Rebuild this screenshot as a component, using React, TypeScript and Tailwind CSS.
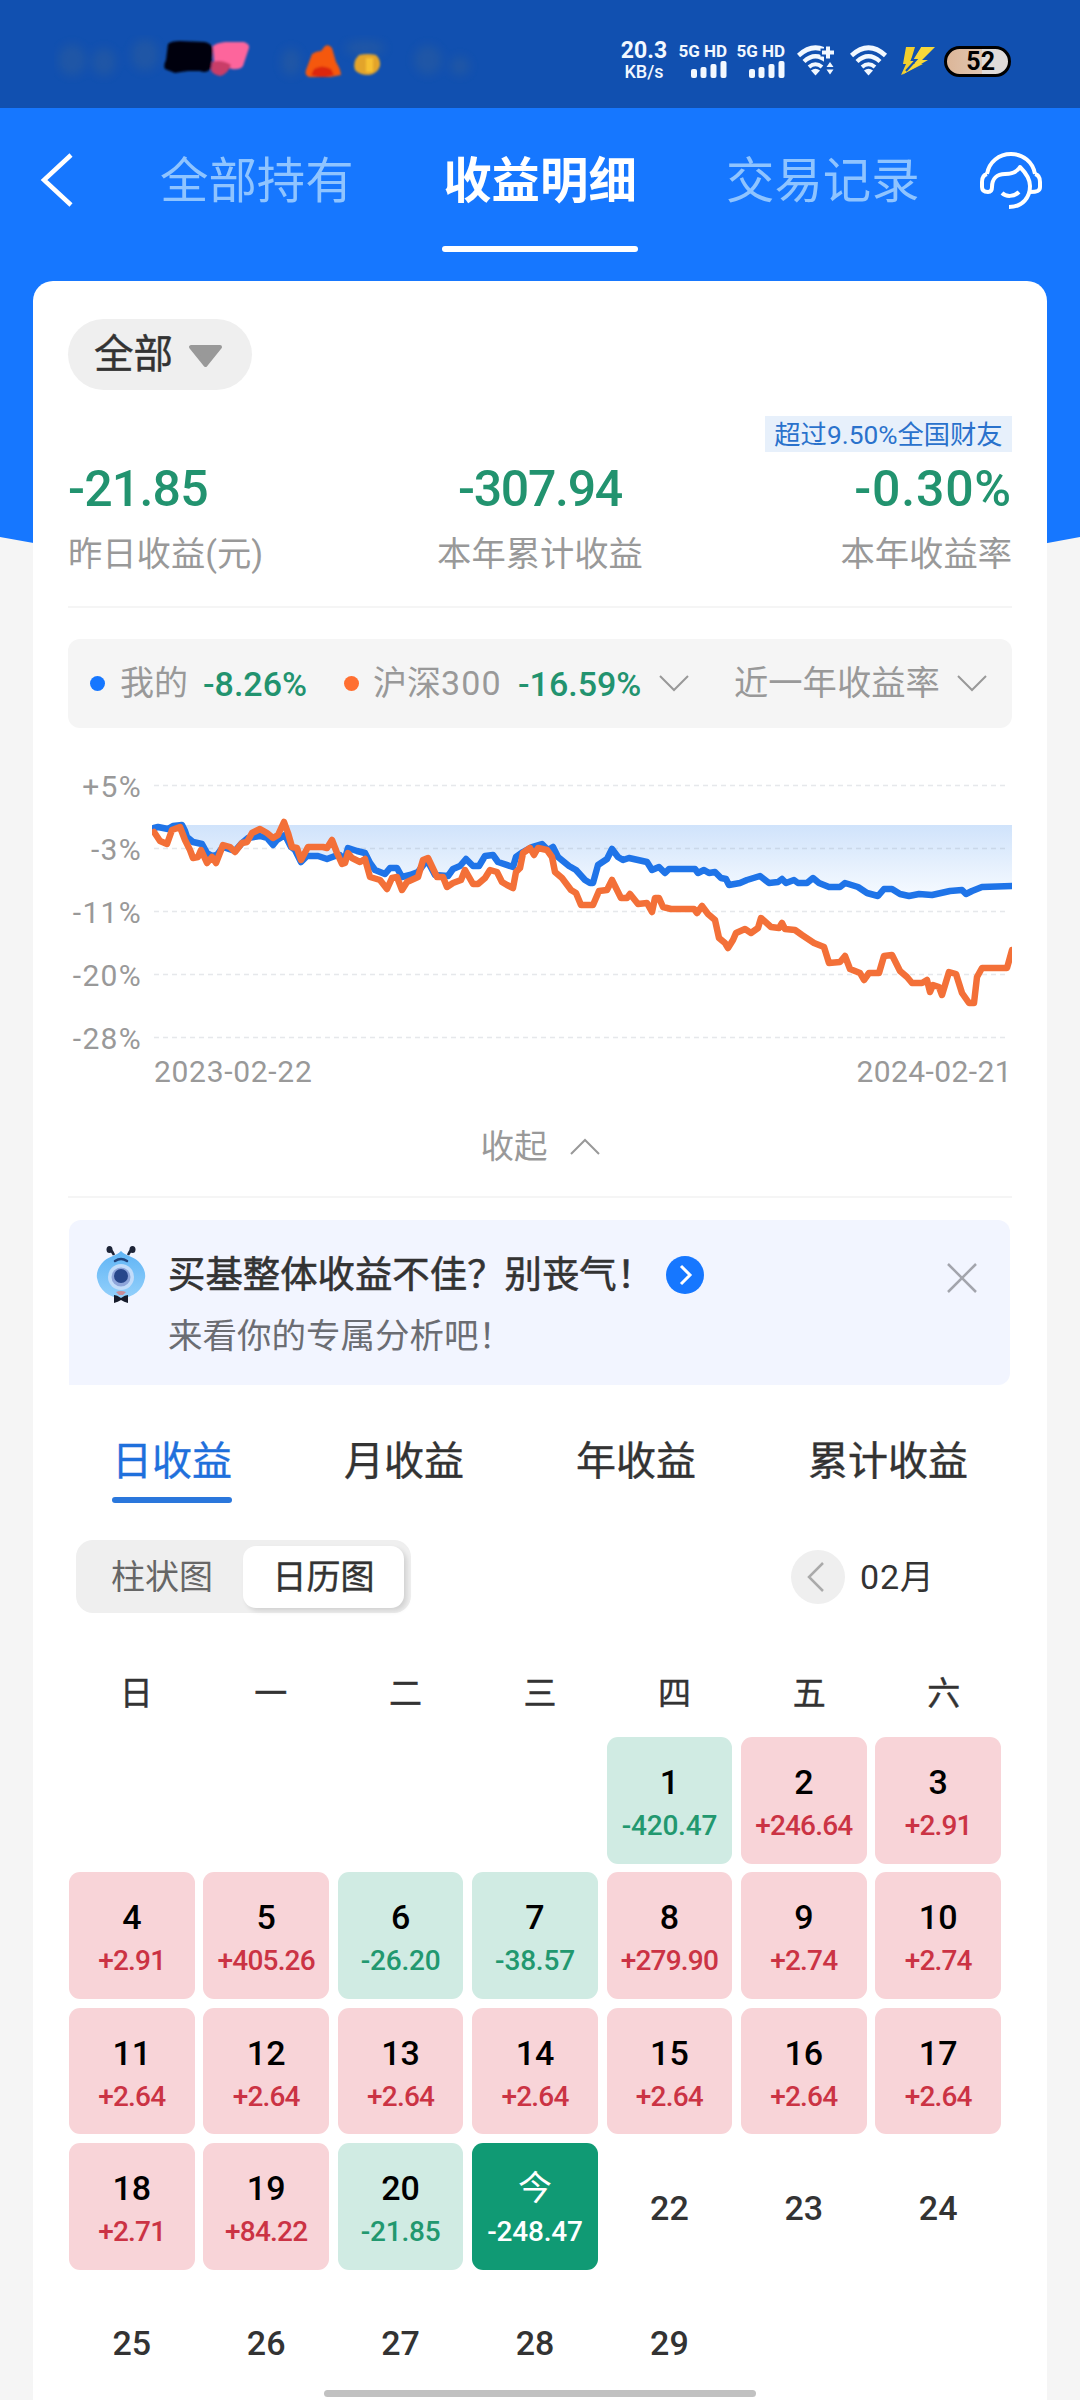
import React from 'react';
import clsx from 'clsx';

interface DayCell {
  day: string;
  value?: string;
  today?: boolean;
}

interface StatItem {
  value: string;
  label: string;
  align: string;
  tracking: string;
}

const stats: StatItem[] = [
  { value: '-21.85', label: '昨日收益(元)', align: 'items-start', tracking: 'tracking-[-0.8px]' },
  { value: '-307.94', label: '本年累计收益', align: 'items-center', tracking: 'tracking-[-1.3px]' },
  { value: '-0.30%', label: '本年收益率', align: 'items-end', tracking: 'tracking-[0.8px]' },
];

const yLabels = ['+5%', '-3%', '-11%', '-20%', '-28%'];
const gridLines = [785.5, 848.5, 911.5, 974.5, 1037.5];
const weekdays = ['日', '一', '二', '三', '四', '五', '六'];
const periods = ['日收益', '月收益', '年收益', '累计收益'];

const days: (DayCell | null)[] = [
  null,
  null,
  null,
  null,
  { day: '1', value: '-420.47' },
  { day: '2', value: '+246.64' },
  { day: '3', value: '+2.91' },
  { day: '4', value: '+2.91' },
  { day: '5', value: '+405.26' },
  { day: '6', value: '-26.20' },
  { day: '7', value: '-38.57' },
  { day: '8', value: '+279.90' },
  { day: '9', value: '+2.74' },
  { day: '10', value: '+2.74' },
  { day: '11', value: '+2.64' },
  { day: '12', value: '+2.64' },
  { day: '13', value: '+2.64' },
  { day: '14', value: '+2.64' },
  { day: '15', value: '+2.64' },
  { day: '16', value: '+2.64' },
  { day: '17', value: '+2.64' },
  { day: '18', value: '+2.71' },
  { day: '19', value: '+84.22' },
  { day: '20', value: '-21.85' },
  { day: '今', value: '-248.47', today: true },
  { day: '22' },
  { day: '23' },
  { day: '24' },
  { day: '25' },
  { day: '26' },
  { day: '27' },
  { day: '28' },
  { day: '29' },
];

const minePoints =
  '154,828 158,827 168,829 173,826 182,825 185,831 187,837 193,842 202,844 207,853 212,856 217,855 223,847 235,851 242,843 248,838 260,836 267,838 273,845 277,840 285,835 291,847 295,850 301,862 307,856 318,856 327,859 335,856 340,855 344,862 348,848 357,851 365,853 370,863 375,870 385,874 390,868 397,868 402,877 410,875 418,872 427,860 435,875 448,876 453,869 460,866 466,859 473,866 479,866 485,856 493,855 498,862 513,867 516,857 523,852 532,847 542,844 548,850 553,847 558,857 569,866 576,870 585,880 590,883 593,883 598,865 607,859 612,849 618,857 623,860 629,858 647,862 652,870 659,867 665,873 669,869 695,869 698,873 704,870 709,873 715,872 721,878 726,879 729,885 740,883 747,880 760,876 769,883 778,882 782,879 786,883 794,880 798,883 807,883 813,878 819,883 829,887 840,887 845,883 858,887 867,893 878,896 884,889 892,889 900,894 909,896 919,894 932,895 950,891 962,890 966,894 972,891 982,887 1012,886';

const indexPoints =
  '154,832 160,841 167,844 172,830 180,827 185,840 190,850 193,858 198,857 201,850 207,863 212,857 216,863 223,845 230,847 235,852 242,843 247,842 252,833 260,829 267,833 273,838 278,835 284,822 288,833 292,847 297,848 301,860 308,847 323,847 327,848 332,840 337,853 342,864 345,863 348,853 352,858 360,862 365,859 370,877 380,880 387,889 392,878 397,877 402,890 407,882 418,877 423,860 428,858 437,877 443,877 447,887 453,883 461,880 465,870 473,884 478,884 485,878 490,870 497,872 502,882 507,885 513,888 516,872 520,868 523,853 530,848 534,855 538,848 547,850 552,857 555,872 562,878 571,890 576,893 581,905 593,905 599,891 607,890 612,880 621,898 627,898 630,894 638,904 647,903 652,912 655,898 659,898 663,907 671,909 694,909 697,913 702,906 708,914 715,920 719,938 725,943 728,948 733,940 736,933 745,929 751,933 758,928 761,918 771,927 779,928 782,923 785,929 795,930 802,935 814,943 824,947 829,963 840,962 845,956 850,969 860,973 864,980 869,973 879,973 884,956 892,955 900,971 907,977 912,983 922,983 927,980 930,992 933,985 939,987 942,995 949,972 956,974 962,993 969,1003 974,1003 977,977 982,968 1007,968 1012,950';

const Chevron: React.FC<{ d: string; className?: string }> = ({ d, className }) => (
  <svg width="30" height="18" viewBox="0 0 30 18" fill="none" className={className}>
    <path d={d} stroke="#999" strokeWidth="2" />
  </svg>
);

const Signal: React.FC = () => (
  <div className="flex w-12 flex-col items-end">
    <span className="text-[17px] leading-[18px] font-bold whitespace-nowrap">5G HD</span>
    <svg width="36" height="17" viewBox="0 0 36 17" fill="#f2f8ff" className="mt-px">
      <rect x="0" y="8" width="6" height="9" rx="2" />
      <rect x="9.5" y="6" width="6" height="11" rx="2" />
      <rect x="19.5" y="3" width="6" height="14" rx="2" />
      <rect x="29.5" y="0" width="6" height="17" rx="2" />
    </svg>
  </div>
);

const Wifi: React.FC<{ plus?: boolean }> = ({ plus }) => (
  <svg width="38" height="32" viewBox="0 0 38 32" fill="none" stroke="#f2f8ff">
    <path d="M1.5 10.5 Q18.5 -5 35.5 10.5" strokeWidth="4.6" />
    <path d="M7 16.5 Q18.5 6 30 16.5" strokeWidth="4.4" />
    <path d="M12 22 Q18.5 16.5 25 22" strokeWidth="4" />
    <path d="M14 25.5 Q18.5 22 23 25.5 L18.5 30.5Z" fill="#f2f8ff" stroke="none" />
    {plus && (
      <>
        <path d="M31 0V15M23.5 7.5H38.5" stroke="#1150b0" strokeWidth="8" />
        <path d="M27 15H38V32H27Z" fill="#1150b0" stroke="none" />
        <path d="M31 1.5V13.5M25 7.5H37" strokeWidth="4" />
        <path d="M29.5 22L33 17L36.5 22ZM29.5 24.5L33 29.5L36.5 24.5Z" fill="#f2f8ff" stroke="none" />
      </>
    )}
  </svg>
);

const StatusBar: React.FC = () => (
  <div className="flex h-[108px] items-center bg-[#1150b0] pl-[54px] text-[#f2f8ff]">
    <svg width="430" height="50" viewBox="54 35 430 50" className="mt-[12px]">
      <defs>
        <filter id="soft" x="-20%" y="-20%" width="140%" height="140%">
          <feGaussianBlur stdDeviation="5" />
        </filter>
        <filter id="edge">
          <feGaussianBlur stdDeviation="0.8" />
        </filter>
      </defs>
      <g filter="url(#soft)" fill="#3f6590" opacity="0.3">
        <ellipse cx="72" cy="60" rx="14" ry="16" />
        <ellipse cx="104" cy="62" rx="12" ry="14" />
        <ellipse cx="145" cy="55" rx="14" ry="16" />
        <ellipse cx="291" cy="62" rx="10" ry="14" />
        <ellipse cx="365" cy="48" rx="20" ry="8" />
        <ellipse cx="428" cy="60" rx="14" ry="15" />
        <ellipse cx="460" cy="66" rx="10" ry="10" />
      </g>
      <g filter="url(#edge)">
        <path d="M168 44Q171 41 180 41L205 42Q213 44 213 50L211 68Q207 74 200 71L188 71Q180 72 175 73L165 69Q163 66 166 60Z" fill="#02040d" />
        <path d="M213 46Q216 43 225 42L244 42Q250 44 249 48L243 66Q240 70 232 69L214 62Z" fill="#fd659c" />
        <path d="M212 62Q222 59 231 65Q228 74 220 76Q212 74 211 70Z" fill="#c93c68" />
        <path d="M325 46Q329 44 332 48L336 62Q341 70 341 75L330 77H309Q304 75 306 70L312 54Q316 51 321 51Z" fill="#f5580c" />
        <path d="M314 69Q322 64 331 69L334 75Q322 79 311 75Z" fill="#dc2508" />
        <path d="M359 55Q368 53 376 55Q381 60 380 66Q377 74 369 75Q359 75 355 70Q352 62 359 55Z" fill="#e3a42c" />
        <path d="M366 58H373V72H366Z" fill="#f7c031" />
      </g>
    </svg>
    <div className="mt-[14px] ml-[134px] flex h-[42px] w-[52px] flex-col items-center justify-center">
      <span className="text-[23px] leading-[22px] font-bold">20.3</span>
      <span className="text-[18px] leading-[20px] font-medium">KB/s</span>
    </div>
    <div className="mt-[12px] ml-[9px] flex items-center gap-[10px]">
      <Signal />
      <Signal />
    </div>
    <div className="mt-[14px] ml-[12px] flex items-center gap-[15px]">
      <Wifi plus />
      <Wifi />
    </div>
    <svg width="34" height="28" viewBox="0 0 34 28" className="mt-[14px] ml-[13px]">
      <path d="M5 0H14L10 13H16L11 17H22L0 28L5 17H2Z" fill="#f2cf2e" />
      <path d="M20 0H34L21 13H27L1 28L14 16H9Z" fill="#f7d83a" />
      <path d="M19 0L11 13H15L5 24" stroke="#1150b0" strokeWidth="2" fill="none" />
    </svg>
    <div className="mt-[14px] ml-[9px] flex h-[31px] w-[67px] items-center justify-end rounded-full border-[3px] border-black bg-[linear-gradient(90deg,#dcb698_0,#e0c6b2_58%,#dfdbd9_58%)] pr-[13px] text-[25px] leading-none font-bold text-black">
      52
    </div>
  </div>
);

const Header: React.FC = () => (
  <div className="flex h-[173px] items-start pt-[44px] pl-[40px] text-[48.4px] leading-[60px] text-[#8fc4ff]">
    <svg width="34" height="56" viewBox="0 0 34 56" fill="none">
      <path d="M31 3L4 28L31 53" stroke="#fff" strokeWidth="4.5" />
    </svg>
    <span className="ml-[86px] w-[194px] whitespace-nowrap">全部持有</span>
    <div className="ml-[88px] flex w-[196px] flex-col items-center font-bold whitespace-nowrap text-white">
      <span>收益明细</span>
      <div className="mt-[34px] h-[6px] w-[196px] rounded-full bg-white" />
    </div>
    <span className="ml-[88px] w-[194px] whitespace-nowrap">交易记录</span>
    <svg width="62" height="58" viewBox="0 0 62 58" fill="none" stroke="#fff" strokeWidth="4" strokeLinejoin="round" className="ml-[60px]">
      <path d="M7 22C9 10 19 2 31 2S53 10 55 22" />
      <path d="M7 22C3 23 2 26 2 30V35C2 39 5 40 8 40C11 40 12 38 12 35C12 27 17 22 25 22C32 22 37 20 40 15C46 21 50 27 50 34C50 45 43 55 29 55" />
      <path d="M55 22C59 23 60 26 60 30V35C60 39 57 40 50 40" />
      <path d="M22 41C26 45 34 45 39 40" />
    </svg>
  </div>
);

const TrendChart: React.FC = () => (
  <div>
    <div className="mt-[26px] flex h-[315px]">
      <div className="flex w-[84px] flex-col items-end pt-px pr-[10px] text-[30px] leading-[63px] tracking-[1.3px] text-[#999]">
        {yLabels.map((l) => (
          <span key={l} className="h-[63px] whitespace-nowrap">
            {l}
          </span>
        ))}
      </div>
      <svg width="860" height="315" viewBox="152 754 860 315" fill="none">
        <defs>
          <linearGradient id="mineFill" x1="0" y1="825" x2="0" y2="896" gradientUnits="userSpaceOnUse">
            <stop offset="0" stopColor="#d0e3fb" />
            <stop offset="1" stopColor="#f6faff" />
          </linearGradient>
        </defs>
        <polygon points={`154,825 ${minePoints} 1012,825`} fill="url(#mineFill)" />
        {gridLines.map((y) => (
          <path key={y} d={`M154 ${y}H1008`} stroke="#8c96a5" strokeOpacity="0.22" strokeWidth="1.5" strokeDasharray="5 4" />
        ))}
        <polyline points={minePoints} stroke="#1f74e8" strokeWidth="6.5" strokeLinejoin="round" strokeLinecap="round" />
        <polyline points={indexPoints} stroke="#f37038" strokeWidth="6.5" strokeLinejoin="round" strokeLinecap="round" />
      </svg>
    </div>
    <div className="-mt-[15px] flex h-[36px] justify-between pl-[86px] text-[30px] leading-[36px] text-[#999]">
      <span className="tracking-[0.7px]">2023-02-22</span>
      <span className="tracking-[0.4px]">2024-02-21</span>
    </div>
  </div>
);

const Mascot: React.FC = () => (
  <svg width="50" height="58" viewBox="0 0 50 58" fill="none">
    <defs>
      <linearGradient id="body" x1="0" y1="0" x2="0" y2="1">
        <stop offset="0" stopColor="#5fb4f5" />
        <stop offset="1" stopColor="#93d0fb" />
      </linearGradient>
    </defs>
    <path d="M25 5C30 10 36 10 42 15C47 20 50 26 49 32C47 44 37 52 25 52S3 44 1 32C0 26 3 20 8 15C14 10 20 10 25 5Z" fill="url(#body)" />
    <path d="M18 9Q16 5 14 3M32 9Q34 5 36 3" stroke="#1d2438" strokeWidth="2.5" />
    <ellipse cx="13.5" cy="3.5" rx="3" ry="3.5" fill="#1d2438" />
    <ellipse cx="36.5" cy="3.5" rx="3" ry="3.5" fill="#1d2438" />
    <path d="M19 15Q25 11 31 15" stroke="#20437c" strokeWidth="2.5" strokeLinecap="round" />
    <circle cx="25" cy="31" r="13" fill="#c2dcfa" />
    <circle cx="25" cy="31" r="9.5" fill="#8ea5da" />
    <circle cx="25" cy="30" r="7" fill="#28478b" />
    <path d="M20 46Q25 44 30 46L27 49H23Z" fill="#c98c98" />
    <path d="M18 49Q21 49 25 52Q29 49 32 49V57Q28 56 25 54Q22 56 18 57Z" fill="#161b2b" />
  </svg>
);

const Calendar: React.FC = () => (
  <div>
    <div className="mt-[56px] ml-px grid h-[48px] w-[942px] grid-cols-7 pt-px text-center text-[33px] leading-[48px] text-[#333] [-webkit-text-stroke:0.4px]">
      {weekdays.map((w) => (
        <span key={w}>{w}</span>
      ))}
    </div>
    <div className="mt-[20px] ml-px grid w-[932px] grid-cols-7 gap-x-[8.8px] gap-y-[8.6px]">
      {days.map((d, i) => {
        if (!d) return <div key={i} />;
        if (!d.value) {
          return (
            <div key={i} className="flex h-[126.7px] items-center justify-center pt-[5px] text-[34px] font-medium text-[#333]">
              {d.day}
            </div>
          );
        }
        const loss = d.value.startsWith('-');
        return (
          <div
            key={i}
            className={clsx(
              'flex h-[126.7px] flex-col items-center rounded-[11px] pt-[25px]',
              d.today && 'bg-[#109a74] text-white',
              !d.today && loss && 'bg-[#d0ebe3] text-[#22986f]',
              !d.today && !loss && 'bg-[#f8d4d8] text-[#cb3344]'
            )}
          >
            <span className={clsx('h-[40px] text-[34px] leading-[40px]', !d.today && 'font-medium text-black')}>{d.day}</span>
            <span className={clsx('mt-[6px] text-[28px] leading-[36px] font-medium', loss ? 'tracking-[-0.2px]' : 'tracking-[-0.8px]')}>
              {d.value}
            </span>
          </div>
        );
      })}
    </div>
  </div>
);

const App: React.FC = () => {
  return (
    <div className="relative h-[2400px] w-[1080px] overflow-hidden bg-[#f5f5f5] font-['Roboto','Noto_Sans_CJK_SC',sans-serif]">
      {/* 顶部蓝色弧形背景 */}
      <svg width="1080" height="600" viewBox="0 0 1080 600" className="absolute top-0 left-0">
        <path d="M0 0H1080V537Q540 640 0 537Z" fill="#1677ff" />
      </svg>
      <div className="relative">
        <StatusBar />
        <Header />
        <div className="mx-[33px] h-[2119px] rounded-t-[20px] bg-white px-[35px] pt-[38px]">
          <div className="flex h-[71px] w-[184px] items-center rounded-full bg-[#efefef] pl-[26px] text-[39.5px] text-[#333]">
            <span className="leading-[60px] [-webkit-text-stroke:0.4px]">全部</span>
            <svg width="35" height="24" viewBox="0 0 35 24" className="mt-[3px] ml-[15px]">
              <path d="M3 3H32L17.5 21Z" fill="#999" stroke="#999" strokeWidth="4" strokeLinejoin="round" />
            </svg>
          </div>

          <div className="mt-[26px] flex justify-end">
            <span className="h-[36px] w-[247px] bg-[#e7f0fb] pt-px text-center text-[26.3px] leading-[36px] whitespace-nowrap text-[#2a72cc]">
              超过9.50%全国财友
            </span>
          </div>
          <div className="mt-[13px] grid grid-cols-3">
            {stats.map((s) => (
              <div key={s.label} className={clsx('flex flex-col', s.align)}>
                <span className={clsx('text-[50px] leading-[48px] font-medium text-[#22936f]', s.tracking)}>{s.value}</span>
                <span className="mt-[21px] text-[34.3px] leading-[40px] text-[#999]">{s.label}</span>
              </div>
            ))}
          </div>
          <div className="mt-[32px] h-[2px] bg-[#f5f5f5]" />

          <div className="mt-[31px] flex h-[89px] items-center rounded-[12px] bg-[#f5f5f5] pl-[22px] text-[34px] text-[#999]">
            <div className="h-[15px] w-[15px] rounded-full bg-[#1677ff]" />
            <span className="ml-[15px]">我的</span>
            <span className="mt-[2px] ml-[15px] w-[105px] font-medium whitespace-nowrap text-[#22936f]">-8.26%</span>
            <div className="ml-[36px] h-[15px] w-[15px] rounded-full bg-[#ff6f31]" />
            <span className="ml-[14px] w-[131px] whitespace-nowrap">
              沪深<span className="tracking-[1.2px]">300</span>
            </span>
            <span className="mt-[2px] ml-[14px] w-[124px] font-medium whitespace-nowrap text-[#22936f]">-16.59%</span>
            <Chevron d="M1 1L15 15L29 1" className="ml-[17px]" />
            <span className="ml-[45px] text-[34.3px] whitespace-nowrap">近一年收益率</span>
            <Chevron d="M1 1L15 15L29 1" className="ml-[17px]" />
          </div>

          <TrendChart />

          <div className="mt-[37px] flex h-[40px] items-center justify-center text-[33.5px] leading-[40px] text-[#999]">
            <span>收起</span>
            <Chevron d="M1 16L15 2L29 16" className="ml-[22px]" />
          </div>
          <div className="mt-[29px] h-[2px] bg-[#f5f5f5]" />

          <div className="mt-[22px] mr-[2px] ml-px flex h-[165px] items-start rounded-t-[12px] rounded-br-[12px] bg-[#f2f5ff] pl-[27px]">
            <div className="mt-[26px]">
              <Mascot />
            </div>
            <div className="mt-[28px] ml-[22px] flex flex-col">
              <div className="flex h-[54px] items-center">
                <span className="text-[37.4px] whitespace-nowrap text-[#333] [-webkit-text-stroke:0.6px]">买基整体收益不佳？别丧气！</span>
                <svg width="38" height="38" viewBox="0 0 38 38" fill="none" className="ml-[12px]">
                  <circle cx="19" cy="19" r="19" fill="#1677ff" />
                  <path d="M15 10L24 19L15 28" stroke="#fff" strokeWidth="3" />
                </svg>
              </div>
              <span className="mt-[9px] text-[34.5px] leading-[50px] text-[#6b6d73]">来看你的专属分析吧！</span>
            </div>
            <svg width="30" height="30" viewBox="0 0 30 30" className="mt-[43px] mr-[33px] ml-auto">
              <path d="M1 1L29 29M29 1L1 29" stroke="#a3a5ad" strokeWidth="2.5" />
            </svg>
          </div>

          <div className="mt-[49px] ml-[44px] flex gap-[112px] text-[40px] leading-[56px] text-[#333] [-webkit-text-stroke:0.4px]">
            {periods.map((p, i) => (
              <div key={p} className={clsx('flex flex-col whitespace-nowrap', i === 0 && 'text-[#1f70dc]')}>
                <span>{p}</span>
                <div className={clsx('mt-[7px] h-[6px] rounded-full', i === 0 && 'bg-[#2a77dc]')} />
              </div>
            ))}
          </div>

          <div className="mt-[37px] ml-[8px] flex h-[73px] items-center">
            <div className="flex h-[73px] w-[335px] items-center rounded-[17px] bg-[#efefef] text-[34px] leading-[50px]">
              <span className="ml-[35px] text-[#666]">柱状图</span>
              <div className="ml-[30px] flex h-[62px] w-[161px] items-center justify-center rounded-[13px] bg-white text-[#333] shadow-[3px_3px_5px_rgba(0,0,0,0.12)] [-webkit-text-stroke:0.4px]">
                日历图
              </div>
            </div>
            <div className="ml-[380px] flex h-[54px] w-[54px] items-center justify-center rounded-full bg-[#efefef]">
              <svg width="18" height="30" viewBox="0 0 18 30" fill="none" className="mr-[4px]">
                <path d="M16 1L2 15L16 29" stroke="#aaa" strokeWidth="2.5" />
              </svg>
            </div>
            <span className="ml-[15px] text-[34px] leading-[50px] tracking-[0.8px] text-[#333]">02月</span>
          </div>

          <Calendar />
        </div>
      </div>
      {/* 底部手势条 */}
      <div className="absolute top-[2390px] left-[324px] h-[7px] w-[432px] rounded-full bg-[#c1c1c1]" />
    </div>
  );
};

export default App;
